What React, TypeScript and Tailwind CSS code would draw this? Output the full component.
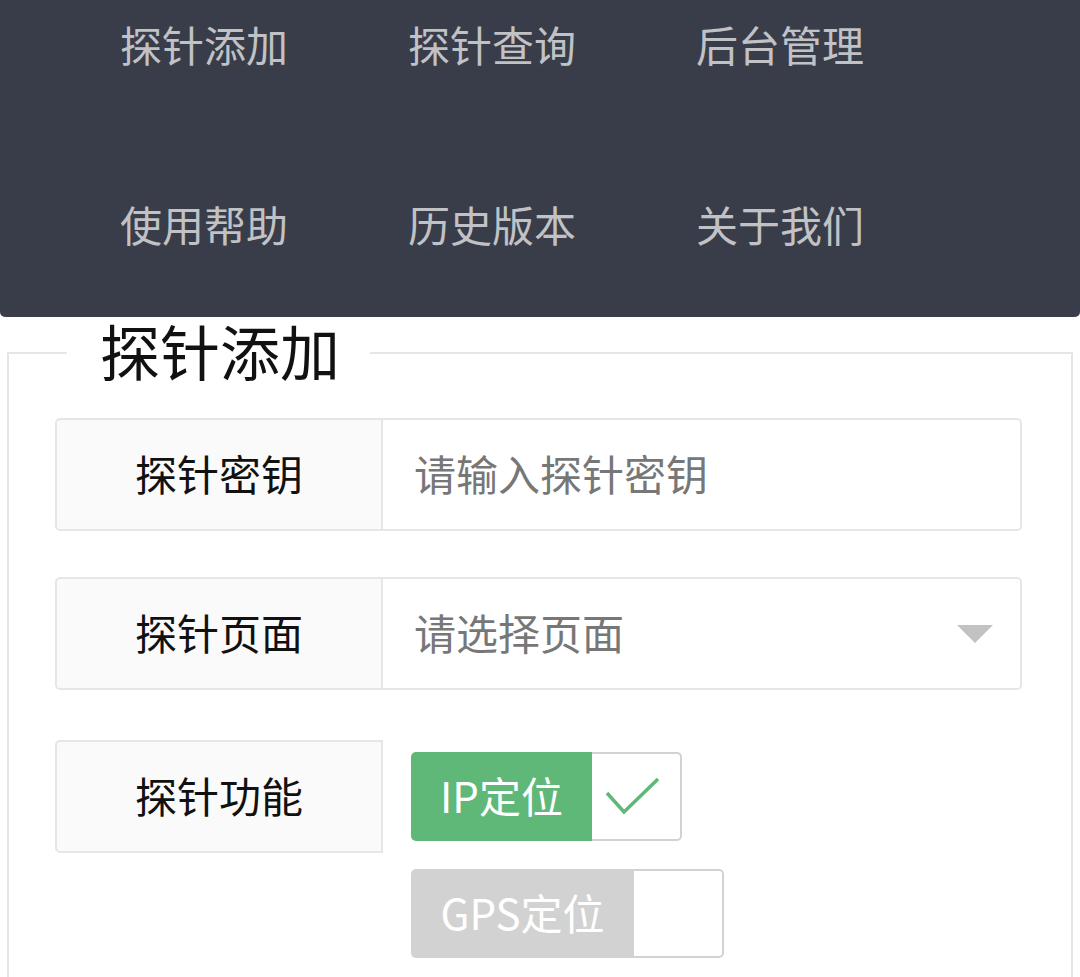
const navItems = ["探针添加", "探针查询", "后台管理", "使用帮助", "历史版本", "关于我们"];

function FormRow({ label, children }: { label: string; children: React.ReactNode }) {
  return (
    <div className="flex h-[113px]">
      <div className="flex w-[328px] shrink-0 items-center justify-center rounded-l-[5px] border-2 border-[#e6e6e6] bg-[#fafafa] pb-[5px] text-[42px] text-[#111]">
        {label}
      </div>
      {children}
    </div>
  );
}

function Switch({ text, on, width }: { text: string; on: boolean; width: string }) {
  return (
    <div className="flex h-[89px]">
      <div
        className={`flex items-center justify-center rounded-l-[5px] pb-[5px] text-[42px] text-white ${width} ${
          on ? "bg-[#5fb878]" : "bg-[#d2d2d2]"
        }`}
      >
        {text}
      </div>
      <div className="flex w-[90px] items-center justify-center rounded-r-[5px] border-2 border-l-0 border-[#d2d2d2] bg-white">
        {on && (
          <svg width="56" height="40" viewBox="0 0 56 40" className="mr-[6px]">
            <path d="M2 16 L19 35 L53 2" fill="none" stroke="#5fb878" strokeWidth="3.5" />
          </svg>
        )}
      </div>
    </div>
  );
}

export default function App() {
  return (
    <div
      className="min-h-[977px] bg-white"
      style={{ fontFamily: '"Noto Sans CJK SC", "Noto Sans", sans-serif' }}
    >
      {/* top nav */}
      <nav className="h-[317px] rounded-b-[5px] bg-[#393d49] pl-[120px]">
        <div className="grid grid-cols-[repeat(3,288px)] gap-y-[92px]">
          {navItems.map((item) => (
            <div key={item} className="h-[88px] text-[42px] leading-[88px] text-white/70">
              {item}
            </div>
          ))}
        </div>
      </nav>

      {/* form */}
      <fieldset className="mx-[7px] mt-[1px] border-2 border-[#e6e6e6] p-0 pb-[40px]">
        <legend className="ml-[58px] pb-[6px] pl-[33px] pr-[30px] text-[60px] leading-[64px] text-[#111]">
          探针添加
        </legend>

        <div className="ml-[46px] mt-[30px] flex w-[967px] flex-col">
          <FormRow label="探针密钥">
            <div className="flex flex-1 items-center rounded-r-[5px] border-2 border-l-0 border-[#e6e6e6] pb-[5px] pl-[31px] text-[42px] text-[#777]">
              请输入探针密钥
            </div>
          </FormRow>

          <div className="mt-[46px]">
            <FormRow label="探针页面">
              <div className="flex flex-1 items-center justify-between rounded-r-[5px] border-2 border-l-0 border-[#e6e6e6] pl-[31px] pr-[27px] text-[42px] text-[#777]">
                <span className="pb-[5px]">请选择页面</span>
                <span className="h-0 w-0 border-x-[18px] border-t-[18px] border-x-transparent border-t-[#c2c2c2]" />
              </div>
            </FormRow>
          </div>

          <div className="mt-[50px] flex">
            <div className="flex h-[113px] w-[328px] shrink-0 items-center justify-center rounded-l-[5px] border-2 border-[#e6e6e6] bg-[#fafafa] pb-[5px] text-[42px] text-[#111]">
              探针功能
            </div>
            <div className="ml-[28px] flex flex-col gap-[28px] pt-[12px]">
              <Switch text="IP定位" on width="w-[181px]" />
              <Switch text="GPS定位" on={false} width="w-[223px]" />
            </div>
          </div>
        </div>
      </fieldset>
    </div>
  );
}
